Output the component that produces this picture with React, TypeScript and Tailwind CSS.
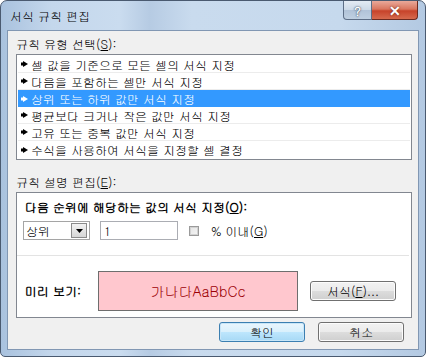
import React from "react";

const KR = "font-['Gulim','Noto_Sans_CJK_KR','Noto_Sans',sans-serif]";

const rules = [
  "셀 값을 기준으로 모든 셀의 서식 지정",
  "다음을 포함하는 셀만 서식 지정",
  "상위 또는 하위 값만 서식 지정",
  "평균보다 크거나 작은 값만 서식 지정",
  "고유 또는 중복 값만 서식 지정",
  "수식을 사용하여 서식을 지정할 셀 결정",
];

function Arrow({ white }: { white?: boolean }) {
  return (
    <svg width="7" height="6" viewBox="0 0 7 6" aria-hidden="true" className="shrink-0">
      <rect x="0" y="1.5" width="2" height="3" fill={white ? "#fff" : "#000"} />
      <path d="M2 0L7 3L2 6Z" fill={white ? "#fff" : "#000"} />
    </svg>
  );
}

function WinButton({ children, primary, className = "" }: { children: React.ReactNode; primary?: boolean; className?: string }) {
  return (
    <button
      type="button"
      className={`flex h-[20px] items-center justify-center rounded-[3px] border text-[12px] text-black ${
        primary
          ? "border-[#3c7fb1] bg-[linear-gradient(#eaf6fd_0%,#d9f0fc_50%,#bee6fd_50%,#a7d9f5_100%)] shadow-[inset_0_0_0_1px_#c8e6f8]"
          : "border-[#707070] bg-[linear-gradient(#f2f2f2_0%,#ebebeb_50%,#dddddd_50%,#cfcfcf_100%)] shadow-[inset_0_0_0_1px_#fcfcfc]"
      } ${className}`}
    >
      {children}
    </button>
  );
}

export default function App() {
  return (
    <div className={`h-[357px] w-[426px] overflow-hidden bg-white ${KR}`}>
      <div className="relative flex h-[357px] w-[426px] flex-col rounded-t-[7px] rounded-b-[5px] border border-[#4a5a70] bg-[linear-gradient(90deg,#a9c2de_0%,#c4d7ec_12%,#cadcef_28%,#b6cbe3_35%,#c9dbee_45%,#c6d9ed_80%,#b3c9e2_100%)]">
        {/* Title bar */}
        <div className="flex h-[29px] shrink-0 items-start justify-between">
          <span className="pl-[9px] pt-[7px] text-[12px] leading-[16px] text-black">서식 규칙 편집</span>
          <div className="mr-[7px] flex">
            <div className="flex h-[19px] w-[29px] items-center justify-center rounded-bl-[4px] border border-t-0 border-[#5d6e86] bg-[linear-gradient(#e3ebf4_0%,#ccd9e7_50%,#b1c3d8_50%,#bfd0e2_100%)] text-[13px] font-bold leading-none text-white [text-shadow:0_0_2px_#44546a,0_0_1px_#44546a]">
              ?
            </div>
            <div className="flex h-[19px] w-[46px] items-center justify-center rounded-br-[4px] border border-l-0 border-t-0 border-[#6b2a20] bg-[linear-gradient(#e9a99a_0%,#d9765f_45%,#c7432a_55%,#d66a4e_100%)] text-[14px] font-bold leading-none text-white [text-shadow:0_0_2px_#5a1a10]">
              ✕
            </div>
          </div>
        </div>

        {/* Client area */}
        <div className="mx-[6px] h-[320px] border border-[#8197b3] bg-[#f0f0f0] pl-[8px] pr-[6px] pt-[4px]">
          <p className="h-[18px] text-[12px] leading-[18px] text-black">
            규칙 유형 선택(<u>S</u>):
          </p>
          <ul className="mt-[1px] h-[106px] border border-[#828790] bg-white py-[1px]">
            {rules.map((r, i) => {
              const sel = i === 2;
              return (
                <li
                  key={r}
                  className={`mx-[1px] flex h-[17px] items-center gap-[3px] pl-[3px] text-[12px] leading-[17px] ${
                    sel ? "bg-[#3399ff] text-white" : "border-b border-[#ececec] text-black"
                  } ${i === 5 ? "border-b-0" : ""}`}
                >
                  <Arrow white={sel} />
                  <span className="whitespace-nowrap">{r}</span>
                </li>
              );
            })}
          </ul>

          <p className="mt-[13px] h-[18px] text-[12px] leading-[18px] text-black">
            규칙 설명 편집(<u>E</u>):
          </p>
          <div className="mt-[1px] h-[126px] border border-[#828790] bg-white pl-[8px] pt-[5px]">
            <p className="h-[18px] text-[12px] font-bold leading-[18px] text-black">
              다음 순위에 해당하는 값의 서식 지정(<u>O</u>):
            </p>
            <div className="mt-[5px] flex h-[19px] items-center">
              <div className="-ml-[2px] flex h-[19px] w-[67px] items-center justify-between border border-[#a5a5a5] bg-white pl-[2px] pr-[2px]">
                <span className="text-[12px] leading-none text-black">상위</span>
                <div className="flex h-[15px] w-[16px] items-center justify-center border border-[#8a8a8a] bg-[linear-gradient(#f2f2f2,#d6d6d6)]">
                  <svg width="7" height="4" viewBox="0 0 7 4" aria-hidden="true">
                    <path d="M0 0H7L3.5 4Z" fill="#000" />
                  </svg>
                </div>
              </div>
              <div className="ml-[10px] flex h-[19px] w-[78px] items-center border border-[#abadb3] bg-white pl-[3px] text-[12px] leading-none text-black">
                1
              </div>
              <div className="ml-[11px] h-[10px] w-[10px] border border-[#9a9a9a] bg-[linear-gradient(135deg,#e4e4e4,#f6f6f6)] shadow-[inset_0_0_0_1px_#d2d2d2]" />
              <span className="ml-[12px] text-[12px] leading-none text-black">
                % 이내(<u>G</u>)
              </span>
            </div>
            <div className="-ml-[8px] mr-[2px] mt-[15px] h-px bg-[#e3e3e3]" />
            <div className="mt-[15px] flex h-[40px] items-center">
              <span className="w-[73px] text-[12px] font-bold leading-none text-black">미리 보기:</span>
              <div className="flex h-[40px] w-[200px] items-center justify-center border border-[#6e6e6e] bg-[#ffc7ce] text-[14px] text-[#9c0006]">
                가나다AaBbCc
              </div>
              <WinButton className="ml-[12px] w-[86px]">
                서식(<u>F</u>)...
              </WinButton>
            </div>
          </div>

          <div className="mr-[8px] mt-[4px] flex justify-end gap-[13px]">
            <WinButton primary className="w-[86px]">
              확인
            </WinButton>
            <WinButton className="w-[86px]">취소</WinButton>
          </div>
        </div>
      </div>
    </div>
  );
}
